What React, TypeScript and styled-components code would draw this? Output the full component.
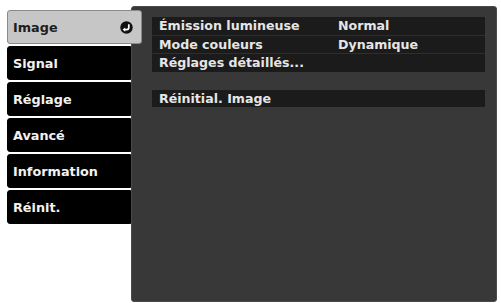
import styled, { createGlobalStyle } from "styled-components";

const GlobalStyle = createGlobalStyle`
    html, body {
        margin: 0;
        padding: 0;
        background: #fff;
    }
    body {
        font-family: "DejaVu Sans", "Liberation Sans", sans-serif;
    }
`;

const tabs = ["Image", "Signal", "Réglage", "Avancé", "Information", "Réinit."];

const groups = [
    [
        {label: "Émission lumineuse", value: "Normal"},
        {label: "Mode couleurs", value: "Dynamique"},
        {label: "Réglages détaillés...", value: ""},
    ],
    [{label: "Réinitial. Image", value: ""}],
];

const ReturnIcon = () => (
    <svg width="13" height="13" viewBox="0 0 13 13">
        <circle cx="6.5" cy="6.5" r="6.2" fill="#111"/>
        <path d="M8.8 3.2 V6.6 Q8.8 8.6 6.8 8.6 H4.6" stroke="#fff" strokeWidth="1.7" fill="none"/>
        <polygon points="2.6,8.6 5.2,6.4 5.2,10.8" fill="#fff"/>
    </svg>
);

export default function App() {
    return (
        <>
            <GlobalStyle/>
            <Screen>
                <Sidebar>
                    {tabs.map((t, i) => (
                        <Tab key={t} $active={i === 0}>
                            <span>{t}</span>
                            {i === 0 && <ReturnIcon/>}
                        </Tab>
                    ))}
                </Sidebar>
                <Panel>
                    {groups.map((g, gi) => (
                        <Group key={gi}>
                            {g.map((r) => (
                                <Row key={r.label}>
                                    <Label>{r.label}</Label>
                                    <Value>{r.value}</Value>
                                </Row>
                            ))}
                        </Group>
                    ))}
                </Panel>
            </Screen>
        </>
    );
}

const Screen = styled.div`
    display: flex;
    align-items: flex-start;
    padding: 6px 0 0 7px;
    width: 501px;
    height: 303px;
    box-sizing: border-box;
`;

const Sidebar = styled.div`
    width: 124px;
    flex-shrink: 0;
    display: flex;
    flex-direction: column;
    align-items: flex-start;
    gap: 2px;
    padding-top: 4px;
    position: relative;
    z-index: 1;
`;

const Tab = styled.div<{ $active?: boolean }>`
    box-sizing: border-box;
    height: 34px;
    width: ${(p) => (p.$active ? "135px" : "124px")};
    flex-shrink: 0;
    display: flex;
    align-items: center;
    justify-content: space-between;
    padding: 0 8px 0 5px;
    background: ${(p) => (p.$active ? "#c6c6c6" : "#000")};
    color: ${(p) => (p.$active ? "#1e1e1e" : "#f2f2f2")};
    border: 1px solid ${(p) => (p.$active ? "#8a8a8a" : "#000")};
    border-radius: ${(p) => (p.$active ? "3px" : "3px 0 0 3px")};
    font-size: 12.8px;
    font-weight: bold;
`;

const Panel = styled.div`
    box-sizing: border-box;
    width: 366px;
    height: 296px;
    background: #383838;
    border: 1px solid #4a4a4a;
    border-radius: 3px;
    padding: 10px 11px 0 20px;
    display: flex;
    flex-direction: column;
    gap: 18px;
`;

const Group = styled.div`
    display: flex;
    flex-direction: column;
    gap: 1px;
    background: #2e2e2e;
`;

const Row = styled.div`
    height: 17.5px;
    display: flex;
    align-items: center;
    background: #1b1b1b;
    color: #e6e6e6;
    font-size: 12.6px;
    font-weight: bold;
    padding-left: 7px;
`;

const Label = styled.span`
    width: 179px;
    white-space: nowrap;
`;

const Value = styled.span`
    white-space: nowrap;
`;
